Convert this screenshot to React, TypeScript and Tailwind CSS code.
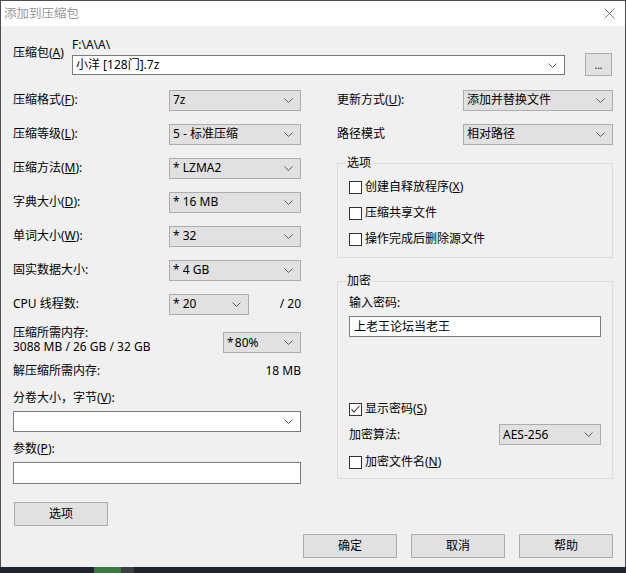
import React from "react";

const Chevron = () => (
  <svg width="9" height="5" viewBox="0 0 9 5" className="shrink-0">
    <polyline points="0.5,0.5 4.5,4.5 8.5,0.5" fill="none" stroke="#5a5a5a" strokeWidth="1" />
  </svg>
);

function Combo({ children, className = "", white = false }: { children?: React.ReactNode; className?: string; white?: boolean }) {
  return (
    <div
      className={
        "flex items-center justify-between pl-[3px] pr-[7px] border " +
        (white ? "border-[#7a7a7a] bg-white " : "border-[#adadad] bg-[#e1e1e1] ") +
        className
      }
    >
      <span className="whitespace-pre">{children}</span>
      <Chevron />
    </div>
  );
}

function Check({ checked = false, children }: { checked?: boolean; children: React.ReactNode }) {
  return (
    <div className="flex h-[26px] items-center">
      <div className="flex h-[13px] w-[13px] items-center justify-center border border-[#333] bg-white">
        {checked && (
          <svg width="11" height="11" viewBox="0 0 11 11">
            <polyline points="1.5,5.5 4,8 9.5,2" fill="none" stroke="#333" strokeWidth="1.1" />
          </svg>
        )}
      </div>
      <span className="ml-[3px]">{children}</span>
    </div>
  );
}

function Btn({ children, className = "" }: { children: React.ReactNode; className?: string }) {
  return (
    <div className={"flex h-[24px] w-[94px] items-center justify-center border border-[#adadad] bg-[#e1e1e1] " + className}>
      {children}
    </div>
  );
}

export default function App() {
  return (
    <div className="flex h-[573px] w-[626px] flex-col bg-[#1c2530] font-['Noto_Sans','Noto_Sans_CJK_SC',sans-serif] text-[12px] leading-[14px] text-black">
      <div className="flex h-[567px] flex-col border-x border-t border-[#4a4e55]">
        {/* title bar */}
        <div className="flex h-[25px] items-center justify-between bg-white pl-[3px] pr-[10px]">
          <span className="text-[12.5px] text-[#999]">添加到压缩包</span>
          <svg width="11" height="11" viewBox="0 0 11 11">
            <path d="M0.5 0.5 L10.5 10.5 M10.5 0.5 L0.5 10.5" stroke="#777" strokeWidth="1" />
          </svg>
        </div>
        {/* body */}
        <div className="flex flex-1 flex-col bg-[#f0f0f0] pl-[12px] pr-[12px] pt-[12px]">
          {/* archive row */}
          <div className="flex h-[38px] items-start">
            <div className="mt-[8px] w-[59px]">
              压缩包(<u>A</u>)
            </div>
            <div className="flex flex-col">
              <div className="h-[14px]">F:\A\A\</div>
              <Combo white className="mt-[3px] h-[20px] w-[493px] pr-[6px]">
                小洋 [128门].7z
              </Combo>
            </div>
            <div className="ml-[20px] mt-[15px] flex h-[23px] w-[27px] items-center justify-center border border-[#adadad] bg-[#e1e1e1] text-[10px]">
              ...
            </div>
          </div>

          <div className="mt-[7px] flex">
            {/* left column */}
            <div className="flex w-[288px] flex-col">
              <div className="flex h-[34px] items-center">
                <span className="w-[156px]">压缩格式(<u>F</u>):</span>
                <Combo className="h-[21px] w-[132px]">7z</Combo>
              </div>
              <div className="flex h-[34px] items-center">
                <span className="w-[156px]">压缩等级(<u>L</u>):</span>
                <Combo className="h-[21px] w-[132px]">5 - 标准压缩</Combo>
              </div>
              <div className="flex h-[34px] items-center">
                <span className="w-[156px]">压缩方法(<u>M</u>):</span>
                <Combo className="h-[21px] w-[132px]">{"* LZMA2"}</Combo>
              </div>
              <div className="flex h-[34px] items-center">
                <span className="w-[156px]">字典大小(<u>D</u>):</span>
                <Combo className="h-[21px] w-[132px]">{"* 16 MB"}</Combo>
              </div>
              <div className="flex h-[34px] items-center">
                <span className="w-[156px]">单词大小(<u>W</u>):</span>
                <Combo className="h-[21px] w-[132px]">{"* 32"}</Combo>
              </div>
              <div className="flex h-[34px] items-center">
                <span className="w-[156px]">固实数据大小:</span>
                <Combo className="h-[21px] w-[132px]">{"* 4 GB"}</Combo>
              </div>
              <div className="flex h-[34px] items-center">
                <span className="w-[156px]">CPU 线程数:</span>
                <Combo className="h-[21px] w-[80px]">{"* 20"}</Combo>
                <span className="flex-1 text-right">/ 20</span>
              </div>
              <div className="mt-[5px] flex items-start justify-between">
                <div className="flex flex-col">
                  <span className="h-[14px]">压缩所需内存:</span>
                  <span className="h-[14px] leading-[14px]">3088 MB / 26 GB / 32 GB</span>
                </div>
                <Combo className="mt-[6px] h-[21px] w-[78px]">{"*\u200A80%"}</Combo>
              </div>
              <div className="mt-[10px] flex justify-between">
                <span>解压缩所需内存:</span>
                <span>18 MB</span>
              </div>
              <div className="mt-[13px]">分卷大小，字节(<u>V</u>):</div>
              <Combo white className="mt-[6px] h-[21px] w-[288px]" />
              <div className="mt-[10px]">参数(<u>P</u>):</div>
              <div className="mt-[6px] h-[22px] w-[288px] border border-[#7a7a7a] bg-white" />
              <Btn className="ml-[1px] mt-[18px]">选项</Btn>
            </div>

            {/* right column */}
            <div className="ml-[36px] flex w-[276px] flex-col">
              <div className="flex h-[34px] items-center">
                <span className="w-[126px]">更新方式(<u>U</u>):</span>
                <Combo className="h-[21px] w-[150px]">添加并替换文件</Combo>
              </div>
              <div className="flex h-[34px] items-center">
                <span className="w-[126px]">路径模式</span>
                <Combo className="h-[21px] w-[150px]">相对路径</Combo>
              </div>
              <fieldset className="mt-[5px] border border-[#dcdcdc] pb-[5px] pl-[11px] pr-[11px]">
                <legend className="-ml-[3px] px-[1px]">选项</legend>
                <div className="mt-[4px] flex flex-col">
                  <Check>创建自释放程序(<u>X</u>)</Check>
                  <Check>压缩共享文件</Check>
                  <Check>操作完成后删除源文件</Check>
                </div>
              </fieldset>
              <fieldset className="mt-[16px] border border-[#dcdcdc] pb-[3px] pl-[11px] pr-[11px]">
                <legend className="-ml-[3px] px-[1px]">加密</legend>
                <div className="mt-[8px]">输入密码:</div>
                <div className="mt-[6px] flex h-[21px] items-center border border-[#7a7a7a] bg-white pl-[4px]">
                  上老王论坛当老王
                </div>
                <div className="mt-[59px]">
                  <Check checked>显示密码(<u>S</u>)</Check>
                </div>
                <div className="flex h-[25px] items-center justify-between">
                  <span>加密算法:</span>
                  <Combo className="h-[21px] w-[102px]">AES-256</Combo>
                </div>
                <div className="mt-[2px]">
                  <Check>加密文件名(<u>N</u>)</Check>
                </div>
              </fieldset>
            </div>
          </div>

          {/* bottom buttons */}
          <div className="mt-[8px] flex justify-end gap-[14px]">
            <Btn>确定</Btn>
            <Btn>取消</Btn>
            <Btn>帮助</Btn>
          </div>
        </div>
      </div>
      {/* taskbar strip */}
      <div className="flex h-[6px]">
        <div className="w-[94px]" />
        <div className="w-[27px] bg-[#3b7a3f]" />
        <div className="w-[13px] bg-[#3a3f45]" />
      </div>
    </div>
  );
}
